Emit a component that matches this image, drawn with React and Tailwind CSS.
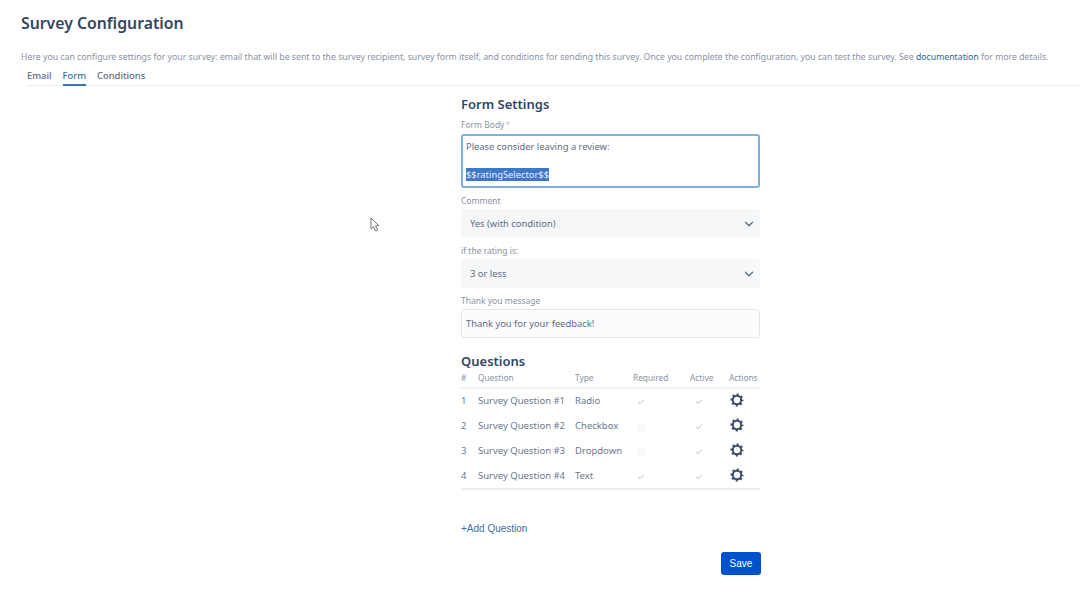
import React from "react";
import { ChevronDown, Check } from "lucide-react";

const rows = [
  ["1", "Survey Question #1", "Radio", true],
  ["2", "Survey Question #2", "Checkbox", false],
  ["3", "Survey Question #3", "Dropdown", false],
  ["4", "Survey Question #4", "Text", true],
];

function Gear() {
  return (
    <svg width="14" height="14" viewBox="0 0 14 14" fill="none" stroke="#3d4c68">
      <circle cx="7" cy="7" r="4.2" strokeWidth="2" />
      <circle cx="7" cy="7" r="5.6" strokeWidth="1.8" strokeDasharray="2.2 2.2" strokeDashoffset="1.1" />
    </svg>
  );
}

function Label({ children, className = "" }) {
  return <div className={`text-[8.5px] leading-[12px] text-[#8993a4] ${className}`}>{children}</div>;
}

function SelectBox({ children }) {
  return (
    <div className="h-[29px] bg-[#f6f7f8] rounded-[3px] flex items-center justify-between pl-[9px] pr-[4px] text-[9.4px] text-[#5e6c84]">
      <span className="pt-[2px]">{children}</span>
      <ChevronDown size={14} strokeWidth={2.2} className="text-[#5e6c84]" />
    </div>
  );
}

function Row({ r }) {
  return (
    <div className="grid grid-cols-[17px_97px_58px_57px_40px_30px] h-[25px] items-center text-[9.5px] text-[#6b778c]">
      <span>{r[0]}</span>
      <span>{r[1]}</span>
      <span>{r[2]}</span>
      <span className="flex pl-[4px]">
        {r[3] ? <Check size={8} strokeWidth={3} className="text-[#b3bac5]" /> : <span className="w-[8px] h-[8px] bg-[#f7f8f9] rounded-[1px]" />}
      </span>
      <span className="flex pl-[5px]">
        <Check size={8} strokeWidth={3} className="text-[#b3bac5]" />
      </span>
      <span className="flex -mt-[4px]">
        <Gear />
      </span>
    </div>
  );
}

export default function App() {
  return (
    <div className="relative w-[1092px] h-[610px] bg-white overflow-hidden font-['Noto_Sans',sans-serif] text-[#42526e]">
      <div className="pl-[21px] pt-[12px]">
        <h1 className="text-[15.8px] leading-[22px] font-semibold text-[#344563]">Survey Configuration</h1>
        <p className="mt-[16px] text-[8.72px] leading-[14px] whitespace-nowrap text-[#8993a4]">
          Here you can configure settings for your survey: email that will be sent to the survey recipient, survey form itself, and conditions for sending this survey. Once you complete the configuration, you can test the survey. See <span className="text-[#2f6299]">documentation</span> for more details.
        </p>
      </div>
      <div className="ml-[27px] mr-[12px] mt-[4px] h-[18px] border-b border-[#ebecf0] flex gap-[11px] text-[9.4px] font-medium text-[#5e6c84] whitespace-nowrap">
        <span className="h-[18px] leading-[16px]">Email</span>
        <span className="h-[18px] leading-[16px] text-[#3b6ea8] border-b-2 border-[#3b73b5]">Form</span>
        <span className="h-[18px] leading-[16px]">Conditions</span>
      </div>
      <div className="ml-[461px] w-[299px]">
        <h2 className="mt-[8px] text-[13px] leading-[20px] font-semibold text-[#344563]">Form Settings</h2>
        <Label className="mt-[5px]">Form Body<span className="ml-[1px] text-[#c1c7d0]">*</span></Label>
        <div className="mt-[3px] h-[54px] border-2 border-[#7fb0e0] rounded-[3px] bg-white pl-[3px] pt-[4px] text-[9.35px] leading-[14px] text-[#5e6c84]">
          <div>Please consider leaving a review:</div>
          <div className="h-[14px]" />
          <div><span className="bg-[#3f78c9] text-[#e8eef8]">$$ratingSelector$$</span></div>
        </div>
        <Label className="mt-[7px]">Comment</Label>
        <div className="mt-[2px]"><SelectBox>Yes (with condition)</SelectBox></div>
        <Label className="mt-[7px]">if the rating is:</Label>
        <div className="mt-[2px]"><SelectBox>3 or less</SelectBox></div>
        <Label className="mt-[7px]">Thank you message</Label>
        <div className="mt-[2px] h-[29px] border border-[#e4e6ea] bg-[#fcfcfd] rounded-[3px] flex items-center px-[4px] pt-[2px] text-[9.35px] text-[#5e6c84]">
          Thank you for your feedback!
        </div>
        <h2 className="mt-[13px] text-[13px] leading-[20px] font-semibold text-[#344563]">Questions</h2>
        <div className="grid grid-cols-[17px_97px_58px_57px_39px_31px] h-[18px] pb-[2px] items-center border-b-2 border-[#f0f1f3] text-[8.3px] text-[#8993a4] whitespace-nowrap">
          <span>#</span>
          <span>Question</span>
          <span>Type</span>
          <span>Required</span>
          <span>Active</span>
          <span>Actions</span>
        </div>
        <div className="h-[101px] border-b-2 border-[#ebecf0]">
          {rows.map((r) => (
            <Row key={r[0]} r={r} />
          ))}
        </div>
        <div className="mt-[32px] text-[10px] leading-[14px] text-[#3d6ea5] font-['Liberation_Sans',sans-serif]">+Add Question</div>
        <div className="mt-[16px] flex justify-end">
          <button className="w-[40px] h-[23px] translate-x-[1px] rounded-[3px] bg-[#0052cc] text-white text-[10px] font-['Liberation_Sans',sans-serif]">Save</button>
        </div>
      </div>
      <svg className="absolute left-[370px] top-[217px]" width="11" height="16" viewBox="0 0 11 16" fill="white" stroke="#777" strokeWidth="1">
        <path d="M1 1v11l2.6-2.4L5.6 14l2-1-2-4.2H9z" />
      </svg>
    </div>
  );
}
